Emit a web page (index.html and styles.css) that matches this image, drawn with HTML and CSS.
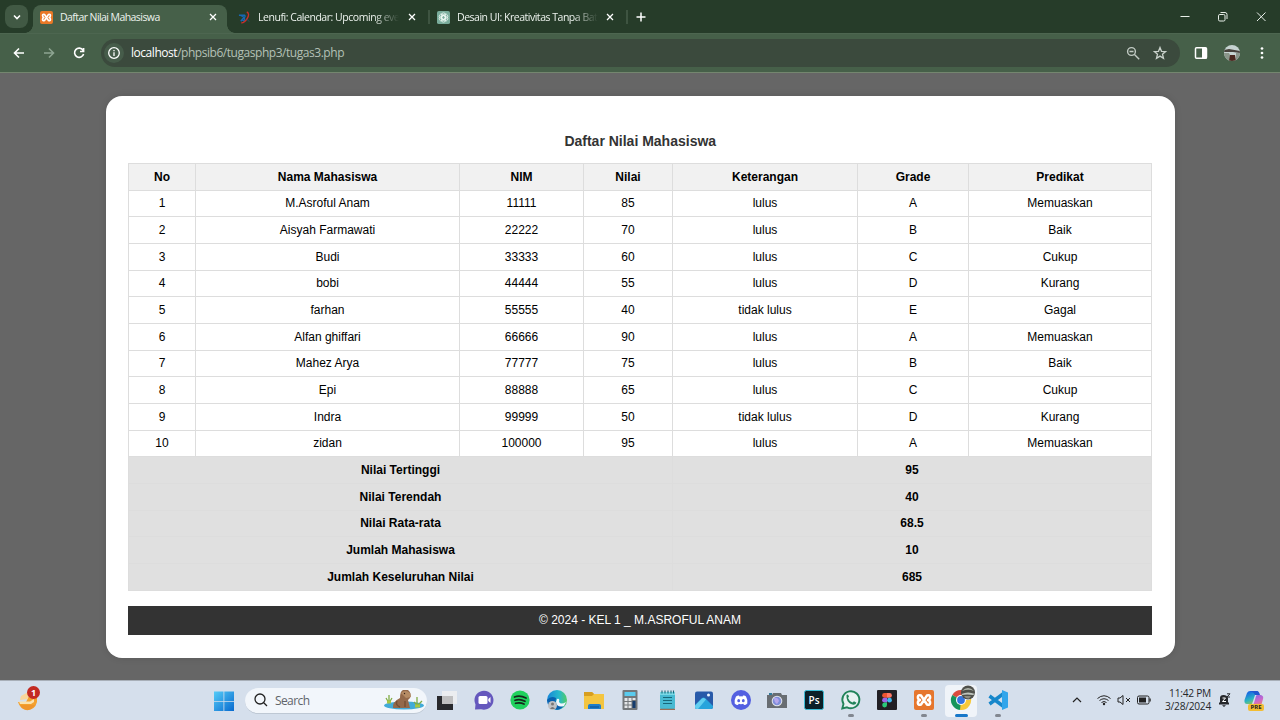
FILE: index.html
```html
<!DOCTYPE html>
<html lang="id">
<head>
<meta charset="utf-8">
<title>Daftar Nilai Mahasiswa</title>
<link rel="stylesheet" href="styles.css">
</head>
<body>
<header class="tabs">
  <div class="tab-search"><svg width="10" height="10" viewBox="0 0 10 10"><path d="M2 3.5 5 6.5 8 3.5" fill="none" stroke="#fff" stroke-width="1.6"/></svg></div>
  <div class="tab active">
    <svg class="favicon" viewBox="0 0 20 20"><rect width="20" height="20" rx="3" fill="#e97826"/><path d="M7 5.5C3 4 3 9 6 10C3 11 3 16 7 14.500L13 5.500C17 4 17 9 14 10C17 11 17 16 13 14.500Z" fill="none" stroke="#fff" stroke-width="2.500" stroke-linejoin="round"/></svg>
    <span class="tab-title t1">Daftar Nilai Mahasiswa</span>
    <svg class="close" viewBox="0 0 8 8"><path d="M1 1 7 7M7 1 1 7"/></svg>
  </div>
  <div class="tab second">
    <svg class="favicon" viewBox="0 0 14 14"><path d="M1 4.500H7Q9 6 5 8.500L3 11M3 5Q7 6 7 9T4 9" fill="none" stroke="#1768b4" stroke-width="1.500"/><path d="M9.500 1Q13 3 10 8T3.500 12.800" fill="none" stroke="#cb302c" stroke-width="1.400"/><path d="M9.500 8.500l2.500 3" fill="none" stroke="#23557a" stroke-width=".8"/></svg>
    <span class="tab-title t2">Lenufi: Calendar: Upcoming eve</span>
    <svg class="close" viewBox="0 0 8 8"><path d="M1 1 7 7M7 1 1 7"/></svg>
  </div>
  <div class="tab third">
    <svg class="favicon" viewBox="0 0 14 14"><rect width="14" height="14" rx="2" fill="#79ac9b"/><g fill="none" stroke="#eef9f4" stroke-width=".8"><rect x="4.700" y="2" width="4.600" height="7" rx="2.300"/><rect x="4.700" y="2" width="4.600" height="7" rx="2.300" transform="rotate(60 7 7)"/><rect x="4.700" y="2" width="4.600" height="7" rx="2.300" transform="rotate(120 7 7)"/><rect x="4.700" y="2" width="4.600" height="7" rx="2.300" transform="rotate(180 7 7)"/><rect x="4.700" y="2" width="4.600" height="7" rx="2.300" transform="rotate(240 7 7)"/><rect x="4.700" y="2" width="4.600" height="7" rx="2.300" transform="rotate(300 7 7)"/></g></svg>
    <span class="tab-title t3">Desain UI: Kreativitas Tanpa Bat</span>
    <svg class="close" viewBox="0 0 8 8"><path d="M1 1 7 7M7 1 1 7"/></svg>
  </div>
  <svg class="newtab" viewBox="0 0 10 10"><path d="M5 .5V9.500M.5 5H9.500" stroke="#fff" stroke-width="1.500"/></svg>
  <div class="window-buttons">
    <svg viewBox="0 0 12 12"><path d="M1.500 5.500h9"/></svg>
    <svg viewBox="0 0 12 12"><rect x="1.500" y="3.500" width="6.500" height="6.500" rx="1.300"/><path d="M3.500 1.500H8Q10 1.500 10 3.500V8"/></svg>
    <svg viewBox="0 0 12 12"><path d="m2 1.500 8.500 8.500M10.500 1.500 2 10"/></svg>
  </div>
</header>
<nav class="toolbar">
  <svg class="nav-icon" viewBox="0 0 14 14"><path d="M12 7H2.500M7 2.500 2.500 7 7 11.500" stroke="#fff"/></svg>
  <svg class="nav-icon" viewBox="0 0 14 14"><path d="M2 7H11.500M7 2.500 11.500 7 7 11.500" stroke="#8da491"/></svg>
  <svg class="nav-icon" viewBox="0 0 14 14"><path d="M11 4.200A4.600 4.600 0 1 0 11.600 8M11.600 2V5.500H8" stroke="#fff"/></svg>
  <div class="address">
    <span class="info"><svg width="14" height="14" viewBox="0 0 14 14"><g fill="none" stroke="#fff" stroke-width="1.300"><circle cx="7" cy="7" r="5.300"/><path d="M7 6.300V9.900M7 4V5.300"/></g></svg></span>
    <span class="url">localhost<span>/phpsib6/tugasphp3/tugas3.php</span></span>
    <svg class="magnifier" viewBox="0 0 14 14"><g fill="none" stroke="#c2cbc4" stroke-width="1.400"><circle cx="5.500" cy="5.500" r="3.900"/><path d="m8.500 8.500 4.700 4.700M3.500 5.500h4"/></g></svg>
    <svg class="star" viewBox="0 0 14 14"><path d="M7 1.500 8.500 5.300 12.600 5.600 9.500 8.200 10.500 12.300 7 10.100 3.500 12.300 4.500 8.200 1.400 5.600 5.500 5.300Z" fill="none" stroke="#c8d1ca" stroke-width="1.300"/></svg>
  </div>
  <svg class="panel" viewBox="0 0 14 14"><rect x="1.500" y="1.800" width="11" height="10.500" rx="1" fill="none" stroke="#fff" stroke-width="1.500"/><path d="M8 2h5v10.500h-5Z" fill="#fff"/></svg>
  <svg class="avatar" viewBox="0 0 16 16"><defs><clipPath id="av"><circle cx="8" cy="8" r="8"/></clipPath></defs><g clip-path="url(#av)"><path fill="#c6d3d1" d="M0 0h16v16H0Z"/><path fill="#46403a" d="M0 5 5 4 16 6V8L9 7 0 7Z"/><path fill="#8a958a" d="M0 8h5l2 4-1 4H0ZM12 8h4v8h-4Z"/><path fill="#4b281f" d="M6 10 11 10 12 16H5Z"/></g></svg>
  <svg class="more" viewBox="0 0 4 14"><g fill="#fff"><circle cx="2" cy="2.500" r="1.350"/><circle cx="2" cy="7" r="1.350"/><circle cx="2" cy="11.500" r="1.350"/></g></svg>
</nav>
<main class="page">
  <section class="card">
    <h1>Daftar Nilai Mahasiswa</h1>
    <table class="grades">
      <thead><tr><th>No</th><th>Nama Mahasiswa</th><th>NIM</th><th>Nilai</th><th>Keterangan</th><th>Grade</th><th>Predikat</th></tr></thead>
      <tbody>
        <tr><td>1</td><td>M.Asroful Anam</td><td>11111</td><td>85</td><td>lulus</td><td>A</td><td>Memuaskan</td></tr>
        <tr><td>2</td><td>Aisyah Farmawati</td><td>22222</td><td>70</td><td>lulus</td><td>B</td><td>Baik</td></tr>
        <tr><td>3</td><td>Budi</td><td>33333</td><td>60</td><td>lulus</td><td>C</td><td>Cukup</td></tr>
        <tr><td>4</td><td>bobi</td><td>44444</td><td>55</td><td>lulus</td><td>D</td><td>Kurang</td></tr>
        <tr><td>5</td><td>farhan</td><td>55555</td><td>40</td><td>tidak lulus</td><td>E</td><td>Gagal</td></tr>
        <tr><td>6</td><td>Alfan ghiffari</td><td>66666</td><td>90</td><td>lulus</td><td>A</td><td>Memuaskan</td></tr>
        <tr><td>7</td><td>Mahez Arya</td><td>77777</td><td>75</td><td>lulus</td><td>B</td><td>Baik</td></tr>
        <tr><td>8</td><td>Epi</td><td>88888</td><td>65</td><td>lulus</td><td>C</td><td>Cukup</td></tr>
        <tr><td>9</td><td>Indra</td><td>99999</td><td>50</td><td>tidak lulus</td><td>D</td><td>Kurang</td></tr>
        <tr><td>10</td><td>zidan</td><td>100000</td><td>95</td><td>lulus</td><td>A</td><td>Memuaskan</td></tr>
      </tbody>
      <tfoot>
        <tr><th class="label">Nilai Tertinggi</th><th class="value">95</th></tr>
        <tr><th class="label">Nilai Terendah</th><th class="value">40</th></tr>
        <tr><th class="label">Nilai Rata-rata</th><th class="value">68.5</th></tr>
        <tr><th class="label">Jumlah Mahasiswa</th><th class="value">10</th></tr>
        <tr><th class="label">Jumlah Keseluruhan Nilai</th><th class="value">685</th></tr>
      </tfoot>
    </table>
    <footer class="credit">© 2024 - KEL 1 _ M.ASROFUL ANAM</footer>
  </section>
</main>
<footer class="taskbar">
  <div class="widget"><svg width="20" height="20" viewBox="0 0 20 20"><path d="M11 5 19 6V11Q17 19 9 19Q2 18 0 11H8Z" fill="#f4a12e"/><path d="M3 5 10 1V8L2 9Z" fill="#f9d69b"/><path d="M1 10.500H12L16 8V11L13 13H2Z" fill="#fbe2af"/><path d="M2 14H17Q13 20 8 19Q4 18 2 14Z" fill="#ef952c"/></svg><b>1</b></div>
  <svg class="start" viewBox="0 0 20 20"><defs><linearGradient id="win" x2="1" y2="1"><stop stop-color="#55ccf8"/><stop offset="1" stop-color="#0869ce"/></linearGradient></defs><path fill="url(#win)" d="M0 .5h9.500V10H0ZM10.300.5H20V10h-9.700ZM0 10.800h9.500V20H0ZM10.300 10.800H20V20h-9.700Z"/></svg>
  <div class="search">
    <svg width="14" height="14" viewBox="0 0 14 14"><path d="M9.500 9.500 13 13M11 6A5 5 0 1 1 1 6A5 5 0 1 1 11 6Z" fill="none" stroke="#222" stroke-width="1.300"/></svg>
    <span>Search</span>
    <svg class="capybara" viewBox="0 0 42 22"><ellipse cx="21" cy="16.500" rx="20" ry="4" fill="#42abd8"/><path d="M10 19Q9 13 17 9Q17 2 20 1L25 1Q29 4 27 9L25 11L27 19Z" fill="#94694a"/><path d="M18 4Q22 0 27 4L28 8L23 9Z" fill="#b58b64"/><path d="M14 12Q12 16 17 18M22 12v6" stroke="#765034" fill="none" stroke-width="1.500"/><circle cx="21.500" cy="4.500" r=".7" fill="#38251c"/><path d="M6 14 3 9M6 14V6M6 14 9 9M34 16V8M34 17 39 12M35 17 31 13" stroke="#7fac43" stroke-width="1.300"/><path d="M4 13h4M32 17h5" stroke="#aac640" stroke-width="3"/></svg>
  </div>
  <div class="apps">
    <span><svg viewBox="0 0 20 20"><path d="M0 6H16V20H0Z" fill="#28292d"/><path d="M5 1H20V14H5Z" fill="#f1f1f1" opacity=".75"/></svg></span>
    <span><svg viewBox="0 0 20 20"><path d="M1 19.500 1.500 14.500A9.500 9.500 0 1 1 7 19.200Z" fill="#6558bd"/><rect x="4.500" y="6" width="9" height="8" rx="1.500" fill="#fff"/><path d="M14.300 9 16.500 7V13L14.300 11Z" fill="#fff"/></svg></span>
    <span><svg viewBox="0 0 20 20"><circle cx="10" cy="10" r="9.600" fill="#20d15d"/><path d="M4.500 7Q10 5 16 8M5 10.300Q10 8.500 15 11.300M5.500 13.300Q10 12 14 14" fill="none" stroke="#16271c" stroke-width="1.700" stroke-linecap="round"/></svg></span>
    <span><svg viewBox="0 0 20 20"><defs><linearGradient id="edge"><stop stop-color="#1686d9"/><stop offset=".6" stop-color="#26b9cb"/><stop offset="1" stop-color="#54cb65"/></linearGradient></defs><circle cx="10" cy="10" r="10" fill="url(#edge)"/><path d="M0 10Q4 5 9 8Q7 15 14 16L18 14Q13 22 7 19Q1 17 0 10Z" fill="#0961af"/><path d="M10 9Q13 8 12 12Q14 15 19 12L17 16Q10 18 9 12Z" fill="#eef8fd"/><circle cx="5.500" cy="15.500" r="4.500" fill="#c0c2c5"/><circle cx="5.500" cy="14" r="1.500" fill="#777"/><path d="M3 19Q5.500 15 8 19Z" fill="#777"/></svg></span>
    <span><svg viewBox="0 0 20 20"><path d="M0 2H8L10 4H20V19H0Z" fill="#f4c540"/><path d="M0 2h8l2 2-2 2H0Z" fill="#d79e20"/><path d="M4 19V15.500Q4 14 6 14H15Q17 14 17 15.500V19Z" fill="#1d7dcb"/><path d="M6 16.500h9v1H6Z" fill="#0c4c8b"/></svg></span>
    <span><svg viewBox="0 0 20 20"><rect x="2.500" width="15" height="20" rx="1" fill="#73777a"/><path fill="#5acbed" d="M4.500 2h11v4h-11Z"/><g fill="#e4e6e8"><path d="M4.500 8h3v3h-3ZM8.500 8h3v3h-3ZM12.500 8h3v2h-3ZM4.500 12h3v2.500h-3ZM8.500 12h3v2.500h-3ZM4.500 15.500h3V18h-3ZM8.500 15.500h3V18h-3Z"/></g><path fill="#153c6d" d="M12.500 11h3v7h-3Z"/></svg></span>
    <span><svg viewBox="0 0 20 20"><rect x="3" y="2" width="15" height="17" rx="1" fill="#48bad2"/><path fill="#79d8e5" d="M3 2h15v3H3Z"/><path d="M5 .5v3M8 .5v3M11 .5v3M14 .5v3M16.500.5v3M6 7.500h9M6 10.500h9M6 13.500h9" stroke="#176779" stroke-width="1.100"/><path d="M3 19.300h15" stroke="#8e522e"/></svg></span>
    <span><svg viewBox="0 0 20 20"><rect x="1" y="1.500" width="18" height="17.500" rx="2" fill="#285aa9"/><path d="M1 15 8 8Q9.500 7 11 8L19 16V17Q19 19 17 19H3Q1 19 1 17Z" fill="#28a4dc"/><path d="M1 15.500 8 8.500Q10 7 12 9.500L4 19H3Q1 19 1 17Z" fill="#63cff0"/><circle cx="14.500" cy="5" r="1.500" fill="#eef7ff"/></svg></span>
    <span><svg viewBox="0 0 20 20"><circle cx="10" cy="10" r="10" fill="#535fe1"/><path d="M5 6.500Q7 5 8 5.500L8.500 6.500Q10 6 11.500 6.500L12 5.500Q14 5 15 6.500Q17 10 16.300 13.500Q15 15 13 15L12.300 13.800Q10 14.500 7.700 13.800L7 15Q5 15 3.700 13.500Q3 10 5 6.500Z" fill="#fff"/><ellipse cx="7.700" cy="10.700" rx="1.400" ry="1.600" fill="#535fe1"/><ellipse cx="12.300" cy="10.700" rx="1.400" ry="1.600" fill="#535fe1"/></svg></span>
    <span><svg viewBox="0 0 20 20"><path d="M0 5H5L6 3H14L15 5H20V18H0Z" fill="#686d72"/><path d="M2 3h3v2H2Z" fill="#30799b"/><circle cx="10" cy="11" r="5.300" fill="#e1e5e8"/><circle cx="10" cy="11" r="4.300" fill="#7f8edb"/><path d="M7 8Q11 7 12 11L10 14Q7 12 7 8Z" fill="#b5a7ed"/></svg></span>
    <span><svg viewBox="0 0 20 20"><rect x=".5" y=".5" width="19" height="19" rx="2" fill="#0b2028" stroke="#3dbdd6"/><text x="10" y="13.500" text-anchor="middle" fill="#fff" font-size="10" font-weight="600" font-family="Open Sans, sans-serif">Ps</text></svg></span>
    <span class="running"><svg viewBox="0 0 20 20"><path d="M1.300 18.500 2.500 14A8.500 8.500 0 1 1 6 17.300Z" fill="#e8f2f1" stroke="#218359" stroke-width="1.900"/><path d="M5.500 5Q7 3.500 8 6.500L7 8Q8 11 11.500 12.500L13 11.300L15.500 12.700Q14 16 10 14Q5 11.500 5.500 5Z" fill="#218359"/></svg></span>
    <span><svg viewBox="0 0 20 20"><rect width="20" height="20" rx="1" fill="#222025"/><path d="M10 3H7.500a2.400 2.400 0 0 0 0 4.800H10Z" fill="#ef5430"/><path d="M10 3h2.500a2.400 2.400 0 0 1 0 4.800H10Z" fill="#ff7866"/><path d="M10 7.800H7.500a2.400 2.400 0 0 0 0 4.800H10Z" fill="#9b65e8"/><circle cx="12.500" cy="10.200" r="2.400" fill="#3eb9f1"/><path d="M10 12.600H7.500a2.400 2.400 0 1 0 2.500 2.400Z" fill="#29ca79"/></svg></span>
    <span class="running"><svg viewBox="0 0 20 20"><rect width="20" height="20" rx="2" fill="#e6762d"/><path d="M7 5.500C3 4 3 9 6 10C3 11 3 16 7 14.500L13 5.500C17 4 17 9 14 10C17 11 17 16 13 14.500Z" fill="none" stroke="#fff" stroke-width="2.500" stroke-linejoin="round"/></svg></span>
    <span class="running current"><svg viewBox="0 0 20 20"><path d="M10 10 1.300 5A10 10 0 0 1 18.700 5Z" fill="#db4c3e"/><path d="M10 10 1.300 5A10 10 0 0 0 10 20Z" fill="#16955a"/><path d="M10 10H18.700V5A10 10 0 0 1 9 20Z" fill="#f7c939"/><circle cx="10" cy="10" r="5" fill="#fff"/><circle cx="10" cy="10" r="3.900" fill="#3575df"/><circle cx="17" cy="2.500" r="7" fill="#4f504b"/><path d="M11 1Q17-5 23 1L20 0Q16-1 11 1Z" fill="#aeb3a9"/><path d="M10.500 4Q17 1 24 4L22 5Q16 4 11 5Z" fill="#bfc4bd"/><path d="M13 6H20L18 8.500Q15 9 13 6Z" fill="#8e8c81"/></svg></span>
    <span class="running"><svg viewBox="0 0 20 20"><path d="M1.500 6 17 17.500M1.500 14 17 2.500" stroke="#1687cb" stroke-width="3.500"/><path d="M14 0 20 2.500V17.500L14 20Z" fill="#31a5eb"/></svg></span>
  </div>
  <div class="tray">
    <svg class="chevron" viewBox="0 0 10 10"><path d="M1 7 5 3 9 7" fill="none" stroke="#222" stroke-width="1.200"/></svg>
    <svg class="wifi" viewBox="0 0 14 12"><g fill="none" stroke="#222"><path d="M.5 4.500Q7-1 13.500 4.500M2.500 6.500Q7 3 11.500 6.500M4.500 8.500Q7 6.500 9.500 8.500"/></g><circle cx="7" cy="10" r="1.200" fill="#222"/></svg>
    <svg class="volume" viewBox="0 0 14 12"><path d="M1 4H3L6 1.500V10.500L3 8H1ZM9 4l4 4M13 4 9 8" fill="none" stroke="#222"/></svg>
    <svg class="battery" viewBox="0 0 14 10"><rect x=".5" y="1" width="11.500" height="8" rx="1.500" fill="none" stroke="#222"/><path d="M2 2.500h7v5H2ZM12.500 3.500h1.200v3h-1.200Z" fill="#222"/></svg>
    <div class="clock"><span>11:42 PM</span><span>3/28/2024</span></div>
    <svg class="bell" viewBox="0 0 13 14"><path d="M1 11.500V10L2 9V5Q2 2 5.500 2T10 5V9L11 10V11.500ZM4 12.300h4L6 14Z" fill="#25272b"/><path d="M4.500 5H7.500L4.500 8.500H8" fill="none" stroke="#fff"/><path d="M9 .8h3L9 4h3" fill="none" stroke="#25272b"/></svg>
    <div class="copilot"><svg width="20" height="20" viewBox="0 0 20 20"><defs><linearGradient id="cl" x1=".6" y2="1"><stop stop-color="#186be2"/><stop offset=".5" stop-color="#29b5c2"/><stop offset="1" stop-color="#bac936"/></linearGradient><linearGradient id="cr" x2=".4" y2="1"><stop stop-color="#7d65eb"/><stop offset=".6" stop-color="#ce69c9"/><stop offset="1" stop-color="#f78462"/></linearGradient></defs><path d="M6 1H14L11 5L8 14H3Q0 14 .5 10L3 3Q4 1 6 1Z" fill="url(#cl)"/><path d="M6 1H13Q15 1 16 5H11Q10 2 6 1Z" fill="#2057d0"/><path d="M12 6Q12 5 14 5H17Q20 6 19 9L17 16Q16 18 13 18H6Q9 16 10 13Z" fill="url(#cr)"/></svg><b>PRE</b></div>
  </div>
</footer>
</body>
</html>
```
FILE: styles.css
```css
* { box-sizing: border-box; }
body { margin: 0; width: 1280px; height: 720px; display: flex; flex-direction: column; overflow: hidden; font-family: "Liberation Sans", Arial, sans-serif; background: #666; }
svg { display: block; flex: none; overflow: visible; }
.tabs, .toolbar, .taskbar { font-family: "Open Sans", "Noto Sans", sans-serif; flex: none; display: flex; }
.tabs { height: 33px; background: #263c29; }
.tab-search { width: 23px; height: 23px; margin: 5px 5px 0; border-radius: 8px; background: #415944; display: flex; align-items: center; justify-content: center; }
.tab { height: 23px; margin-top: 5px; display: flex; align-items: center; flex: none; }
.tab.active { position: relative; width: 194px; height: 28px; padding: 0 10px 4px 7px; border-radius: 8px 8px 0 0; background: #466049; }
.tab.active::before, .tab.active::after { content: ""; position: absolute; bottom: 0; width: 8px; height: 8px; }
.tab.active::before { left: -8px; background: radial-gradient(circle at 0 0, transparent 7.5px, #466049 8px); }
.tab.active::after { right: -8px; background: radial-gradient(circle at 100% 0, transparent 7.5px, #466049 8px); }
.second { width: 203px; padding: 0 12px 0 11px; border-right: 2px solid #3e5441; height: 14px; margin-top: 10px; }
.third { width: 198px; padding: 0 12px 0 7px; border-right: 2px solid #3e5441; height: 14px; margin-top: 10px; }
.favicon { width: 13px; height: 13px; }
.tab-title { color: #edf3ee; font-size: 10.5px; line-height: 16px; letter-spacing: -.57px; white-space: nowrap; flex: none; margin-left: 7px; }
.t2 { letter-spacing: -.46px; }
.t3 { letter-spacing: -.48px; }
.t2, .t3 { width: 141px; mask-image: linear-gradient(90deg, #000 82%, transparent 100%); }
.close { width: 8px; height: 8px; margin-left: auto; stroke: #fff; stroke-width: 1.25; }
.newtab { width: 10px; height: 10px; margin: 12px 0 0 8px; }
.window-buttons { display: flex; gap: 26px; margin: 11px 13px 0 auto; }
.window-buttons svg { width: 12px; height: 12px; fill: none; stroke: #e8efe9; stroke-width: 1; }
.toolbar { height: 40px; align-items: center; background: #466049; border-bottom: 1px solid #74866f; padding-left: 12px; box-shadow: inset 0 1px #4d6650; }
.nav-icon { width: 14px; height: 14px; margin-right: 16px; fill: none; stroke-width: 1.6; }
.nav-icon:nth-child(3) { margin-right: 15px; }
.address { width: 1079px; height: 28px; border-radius: 14px; background: #3b4a3d; display: flex; align-items: center; padding: 0 13px 0 3px; }
.info { width: 20px; height: 20px; border-radius: 50%; background: #465c4a; display: flex; align-items: center; justify-content: center; }
.url { margin-left: 7px; margin-right: auto; color: #fff; font-size: 12px; line-height: 18px; letter-spacing: -.46px; }
.url span { color: #b4c1b6; }
.magnifier, .star { width: 14px; height: 14px; }
.star { margin-left: 13px; }
.panel { width: 14px; height: 14px; margin-left: 14px; }
.avatar { width: 16px; height: 16px; margin-left: 16px; }
.more { width: 4px; height: 14px; margin-left: 20px; }
.page { height: 607px; flex: none; padding-top: 23px; background: #666; }
.card { width: 1069.500px; height: 561.500px; margin-left: 105.500px; border-radius: 16px; background: #fff; box-shadow: 0 0 7px #0002; padding: 36px 22.500px 0; }
.card h1 { font-size: 14px; line-height: 18px; height: 31px; color: #333; text-align: center; margin: 0; }
.grades { display: grid; width: 1024px; grid-template-columns: 67px 264px 124px 89px 185px 111px 183px; grid-template-rows: repeat(16, 26.670px); border-left: 1px solid #ddd; border-top: 1px solid #ddd; font-size: 12px; }
.grades thead, .grades tbody, .grades tfoot, .grades tr { display: contents; }
.grades th, .grades td { display: flex; align-items: center; justify-content: center; padding: 0; border-right: 1px solid #ddd; border-bottom: 1px solid #ddd; color: #000; }
.grades thead th { background: #f1f1f1; }
.grades tfoot th { background: #e0e0e0; }
.grades .label { grid-column: 1 / 5; }
.grades .value { grid-column: 5 / 8; }
.credit { width: 1024px; height: 29px; margin-top: 15.280px; background: #333; color: #fff; display: flex; align-items: center; justify-content: center; font-size: 12px; }
.taskbar { height: 40px; background: #d5dfec; border-top: 1px solid #a8afb8; align-items: center; }
.widget { position: relative; margin-left: 18px; width: 22px; height: 20px; }
.widget b { position: absolute; left: 9px; top: -5px; width: 13px; height: 13px; border-radius: 50%; background: #c32a22; color: #fff; font-size: 9px; line-height: 13px; text-align: center; }
.start { width: 20px; height: 20px; margin-left: 174px; }
.search { width: 182px; height: 26px; margin-left: 11px; border-radius: 13px; background: #f2f6fb; border-bottom: 1px solid #bec8d4; display: flex; align-items: center; padding-left: 9px; }
.search span { font-size: 12px; letter-spacing: -.6px; color: #60646a; margin-left: 7px; }
.capybara { width: 42px; height: 22px; margin: 0 2px 0 auto; }
.apps { display: flex; margin-left: 1.500px; }
.apps span { position: relative; width: 36.730px; height: 40px; display: flex; align-items: center; justify-content: center; flex: none; padding-bottom: 1px; }
.apps svg { position: relative; width: 20px; height: 20px; }
.running::after { content: ""; position: absolute; bottom: 4px; left: 15.500px; width: 6px; height: 2.500px; border-radius: 2px; background: #828790; }
.current::before { content: ""; position: absolute; left: 2.500px; top: 4px; width: 32px; height: 32px; border-radius: 4px; background: #f0f4f9; }
.current::after { left: 12px; width: 13px; background: #1777c9; }
.tray { display: flex; align-items: center; margin-left: auto; padding-right: 16px; padding-bottom: 1px; }
.chevron { width: 10px; height: 10px; margin-right: 15px; }
.wifi { width: 14px; height: 12px; margin-right: 6px; }
.volume { width: 14px; height: 12px; margin-right: 6px; }
.battery { width: 14px; height: 10px; margin-right: 12px; }
.clock { width: 48px; display: flex; flex-direction: column; align-items: flex-end; color: #26282b; font-size: 10.200px; line-height: 13px; letter-spacing: -.25px; white-space: nowrap; }
.bell { width: 13px; height: 14px; margin: 0 13px 0 7px; }
.copilot { position: relative; width: 20px; height: 20px; }
.copilot b { position: absolute; left: 4px; bottom: -1px; width: 16px; height: 7px; border-radius: 2px; background: #f3bd32; color: #222; font-size: 6px; line-height: 7px; text-align: center; }
```
